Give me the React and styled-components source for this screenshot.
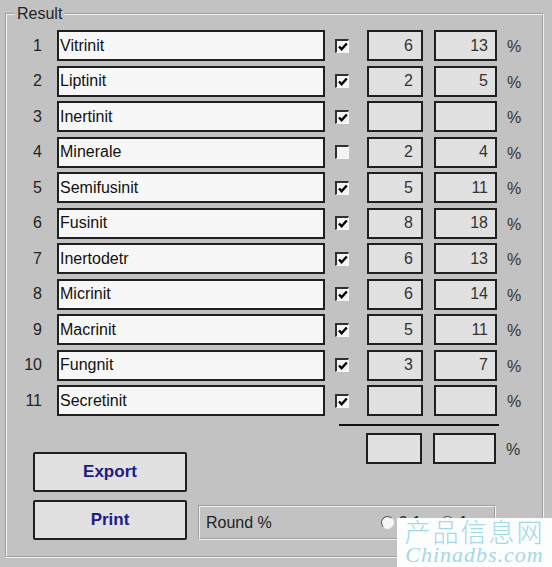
import React from 'react'
import styled, { createGlobalStyle } from 'styled-components'

const rows = [
  ['Vitrinit', true, '6', '13'],
  ['Liptinit', true, '2', '5'],
  ['Inertinit', true, '', ''],
  ['Minerale', false, '2', '4'],
  ['Semifusinit', true, '5', '11'],
  ['Fusinit', true, '8', '18'],
  ['Inertodetr', true, '6', '13'],
  ['Micrinit', true, '6', '14'],
  ['Macrinit', true, '5', '11'],
  ['Fungnit', true, '3', '7'],
  ['Secretinit', true, '', ''],
]

const GlobalStyle = createGlobalStyle`
  html, body {
    margin: 0;
    padding: 0;
    background: #c2c2c2;
  }
  body {
    width: 552px;
    height: 567px;
    overflow: hidden;
    position: relative;
    font-family: "Liberation Sans", Arial, sans-serif;
    color: #1e1e1e;
  }
`

const Frame = styled.fieldset`
  box-sizing: border-box;
  margin: 5px 0 0 5px;
  width: 539px;
  height: 553px;
  padding: 0 8px;
  border: 2px groove #f2f2f2;
  min-inline-size: 0;
`

const Legend = styled.legend`
  padding: 0 2px;
  font-size: 16px;
  color: #222;
`

const Rows = styled.div`
  display: grid;
  grid-template-columns: 42px 268px 42px 56px 11px 63px 1fr;
  grid-auto-rows: 31px;
  row-gap: 4.5px;
  margin-top: 7px;
  align-items: center;
`

const Num = styled.div`
  text-align: right;
  padding-right: 15px;
  font-size: 16px;
  color: #222;
`

const NameBox = styled.div`
  box-sizing: border-box;
  height: 31px;
  border: 2px solid #1f1f1f;
  background: #f7f7f7;
  display: flex;
  align-items: center;
  padding-left: 1px;
  font-size: 16px;
  color: #111;
`

const CheckCell = styled.div`
  display: flex;
  align-items: center;
  padding-left: 10px;
`

const Check = styled.span`
  box-sizing: border-box;
  width: 14px;
  height: 14px;
  border-style: solid;
  border-width: 2px 1px 1px 2px;
  border-color: #303030 #f8f8f8 #f8f8f8 #303030;
  background: #f4f4f4;
  display: flex;
  align-items: center;
  justify-content: center;
`

const ValueBox = styled.div`
  box-sizing: border-box;
  height: 31px;
  border: 2px solid #1f1f1f;
  background: #e1e1e1;
  display: flex;
  align-items: center;
  justify-content: flex-end;
  padding-right: ${p => p.$pad}px;
  font-size: 16px;
  color: #333;
  grid-column: ${p => p.$col};
`

const Percent = styled.div`
  padding-left: 10px;
  padding-top: 3px;
  font-size: 16px;
  color: #333;
`

const Footer = styled.div`
  display: flex;
  padding-left: 18px;
`

const ButtonColumn = styled.div`
  display: flex;
  flex-direction: column;
  gap: 8px;
  padding-top: 36px;
  width: 154px;
`

const Button = styled.button`
  box-sizing: border-box;
  height: 40px;
  width: 154px;
  border: 2px solid #1f1f1f;
  border-radius: 2px;
  background: #e1e1e1;
  font-family: "Liberation Sans", Arial, sans-serif;
  font-weight: bold;
  font-size: 17px;
  color: #1c1c84;
  padding: 0;
`

const RightColumn = styled.div`
  margin-left: 11px;
  display: flex;
  flex-direction: column;
  width: 320px;
`

const Rule = styled.div`
  margin: 8px 0 0 141px;
  width: 160px;
  height: 2px;
  background: #111;
`

const Totals = styled.div`
  display: grid;
  grid-template-columns: 56px 11px 63px 1fr;
  margin: 7px 0 0 168px;
  height: 31px;
  align-items: center;
`

const RoundPanel = styled.div`
  box-sizing: border-box;
  margin-top: 41px;
  width: 298px;
  height: 35px;
  border: 2px groove #f2f2f2;
  display: flex;
  align-items: center;
  padding: 0 26px 0 6px;
  font-size: 16px;
  color: #222;
`

const RoundLabel = styled.span`
  flex: 1;
`

const RadioOption = styled.label`
  display: flex;
  align-items: center;
  gap: 5px;
  margin-left: ${p => p.$gap}px;
  font-size: 16px;
`

const Radio = styled.span`
  box-sizing: border-box;
  width: 13px;
  height: 13px;
  border-radius: 50%;
  border-style: solid;
  border-width: 1px;
  border-color: #555 #f6f6f6 #f6f6f6 #555;
  background: #f6f6f6;
`

const Watermark = styled.div`
  position: absolute;
  left: 397px;
  top: 518px;
  width: 155px;
  height: 49px;
  background: #fcfdfd;
  color: #a4d8e6;
  text-align: center;
  line-height: 1;
  overflow: hidden;
`

const WatermarkCn = styled.div`
  font-family: "Noto Sans CJK SC", sans-serif;
  font-weight: 300;
  font-size: 26px;
  letter-spacing: 2px;
  margin-top: 0;
`

const WatermarkEn = styled.div`
  font-family: "Liberation Serif", serif;
  font-style: italic;
  font-size: 22px;
  letter-spacing: 1px;
`

const Tick = () => (
  <svg width="10" height="9" viewBox="0 0 10 9">
    <path d="M1 4.5 L3.6 7.2 L8.8 1.5" fill="none" stroke="#000" strokeWidth="2.4" />
  </svg>
)

const App = () => {
  return (
    <>
      <GlobalStyle />
      <Frame>
        <Legend>Result</Legend>
        <Rows>
          {rows.map(([name, checked, a, b], i) => (
            <React.Fragment key={name}>
              <Num>{i + 1}</Num>
              <NameBox>{name}</NameBox>
              <CheckCell>
                <Check>{checked && <Tick />}</Check>
              </CheckCell>
              <ValueBox $col='4' $pad={8}>{a}</ValueBox>
              <ValueBox $col='6' $pad={7}>{b}</ValueBox>
              <Percent>%</Percent>
            </React.Fragment>
          ))}
        </Rows>
        <Footer>
          <ButtonColumn>
            <Button>Export</Button>
            <Button>Print</Button>
          </ButtonColumn>
          <RightColumn>
            <Rule />
            <Totals>
              <ValueBox $col='1' $pad={8} />
              <ValueBox $col='3' $pad={7} />
              <Percent>%</Percent>
            </Totals>
            <RoundPanel>
              <RoundLabel>Round %</RoundLabel>
              <RadioOption $gap={0}><Radio />0.1</RadioOption>
              <RadioOption $gap={20}><Radio />1</RadioOption>
            </RoundPanel>
          </RightColumn>
        </Footer>
      </Frame>
      <Watermark>
        <WatermarkCn>产品信息网</WatermarkCn>
        <WatermarkEn>Chinadbs.com</WatermarkEn>
      </Watermark>
    </>
  )
}

export default App
